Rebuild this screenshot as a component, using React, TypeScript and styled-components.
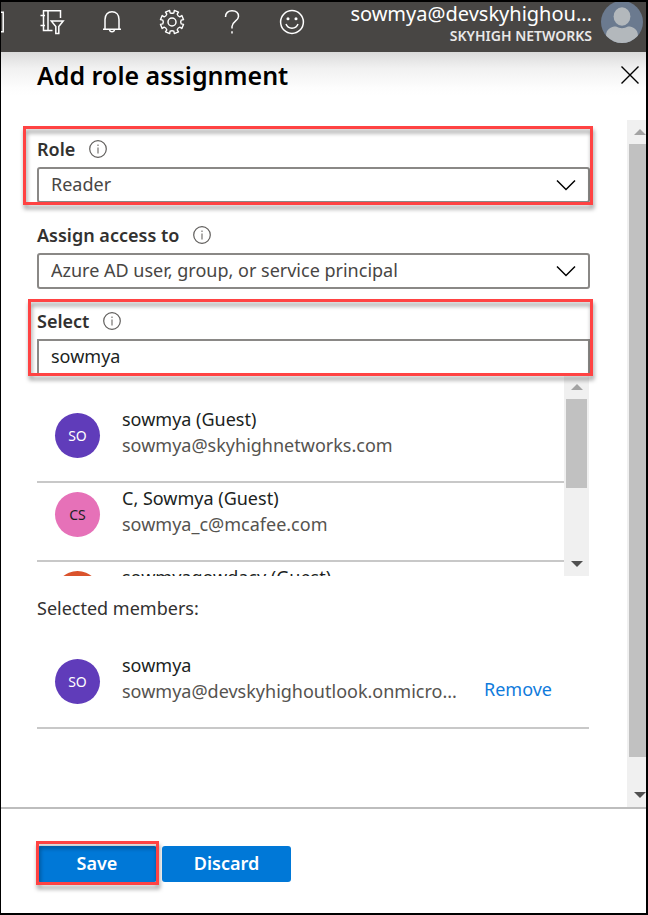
import React, { useState } from "react";
import styled, { createGlobalStyle, css } from "styled-components";

const GlobalStyle = createGlobalStyle`
  *, *::before, *::after { box-sizing: border-box; }
  body { margin: 0; background: #fff; }
  body, button, input, select { font-family: "Segoe UI", "Noto Sans", "Open Sans", sans-serif; }
`;

const callout = css`
  position: absolute;
  content: "";
  border: 3px solid #ff4343;
  filter: drop-shadow(1px 4px 2px rgba(0, 0, 0, 0.4));
  pointer-events: none;
`;

const Page = styled.div`
  display: flex;
  flex-direction: column;
  min-height: 100vh;
  border: solid #000;
  border-width: 2px 2px 2px 1px;
  background: #fff;
  color: #323130;
`;

const TopBar = styled.header`
  display: flex;
  height: 50px;
  flex: none;
  justify-content: space-between;
  background: #484644;
`;

const Tools = styled.nav`
  display: flex;
  align-items: flex-start;
  padding-top: 5px;
  gap: 30px;
`;

const ToolButton = styled.button<{ $clipped?: boolean }>`
  display: flex;
  justify-content: ${(p) => (p.$clipped ? "flex-end" : "center")};
  width: ${(p) => (p.$clipped ? 6 : 30)}px;
  height: 30px;
  align-items: center;
  border: 0;
  padding: 0;
  background: none;
  color: #fff;
  overflow: hidden;

  svg { flex: none; }
`;

const Account = styled.button`
  display: flex;
  gap: 9px;
  align-items: flex-start;
  border: 0;
  padding: 0 3px 0 0;
  background: none;
  color: #fff;
  text-align: right;
`;

const AccountText = styled.span`
  display: flex;
  flex-direction: column;
`;

const AccountName = styled.span`
  font-size: 20px;
  line-height: 24px;
`;

const Tenant = styled.span`
  font-size: 14px;
  font-weight: 600;
  line-height: 20px;
  color: #e8e8e8;
`;

const TitleBar = styled.div`
  display: flex;
  flex: none;
  height: 68px;
  justify-content: space-between;
  align-items: flex-start;
  padding: 5px 7px 0 36px;
  background: linear-gradient(#dadada, #f1f1f1 16px, #fdfdfd 36px, #fff 44px);
`;

const Title = styled.h1`
  margin: 0;
  font-size: 25px;
  font-weight: 600;
  line-height: 36px;
  color: #000;
`;

const CloseButton = styled.button`
  display: flex;
  margin-top: 9px;
  border: 0;
  padding: 0;
  background: none;
`;

const Body = styled.main`
  display: flex;
  flex: 1;
  min-height: 0;
`;

const Content = styled.form`
  flex: 1;
  min-width: 0;
  padding: 17px 37px 0 36px;
`;

const Fields = styled.div`
  display: flex;
  flex-direction: column;
  gap: 20px;
`;

const Field = styled.div<{ $mark?: "role" | "select" }>`
  position: relative;
  display: flex;
  flex-direction: column;
  gap: 6px;

  ${(p) =>
    p.$mark &&
    css`
      &::after {
        ${callout}
        inset: ${p.$mark === "role" ? "-11px -3px -2px -14px" : "-10px -3px -1px -9px"};
      }
    `}
`;

const LabelRow = styled.div`
  display: flex;
  align-items: center;
  gap: 14px;
  height: 24px;
`;

const Label = styled.label`
  font-size: 18px;
  font-weight: 600;
  line-height: 24px;
`;

const InfoButton = styled.button`
  display: flex;
  border: 0;
  padding: 0;
  background: none;
`;

const SelectWrap = styled.div`
  display: grid;
  align-items: center;

  > * { grid-area: 1 / 1; }
  svg { justify-self: end; margin-right: 14px; pointer-events: none; }
`;

const control = css`
  width: 100%;
  height: 36px;
  border: 2px solid #8a8886;
  padding: 0 12px 2px;
  background: #fff;
  font-size: 18px;
  line-height: 24px;
`;

const Select = styled.select`
  ${control}
  appearance: none;
  border-radius: 3px;
  color: #484644;
`;

const TextInput = styled.input`
  ${control}
  color: #201f1e;
  outline: 0;
`;

const ListFrame = styled.div`
  display: flex;
  height: 201px;
  padding-right: 1px;
  overflow: hidden;
`;

const People = styled.ul<{ $inset?: boolean }>`
  flex: 1;
  min-width: 0;
  margin: 0;
  padding: ${(p) => (p.$inset ? 29 : 0)}px 0 0;
  list-style: none;
`;

const Person = styled.li`
  display: flex;
  height: 79px;
  align-items: flex-start;
  border-bottom: 2px solid #c8c8c8;
  padding: 2px 0 0 18px;
`;

const Avatar = styled.span<{ $bg: string; $fg: string }>`
  display: flex;
  flex: none;
  width: 45px;
  height: 45px;
  align-items: center;
  justify-content: center;
  margin: 7px 22px 0 0;
  border-radius: 50%;
  background: ${(p) => p.$bg};
  color: ${(p) => p.$fg};
  font-size: 14px;
`;

const PersonText = styled.span`
  display: flex;
  flex-direction: column;
  min-width: 342px;
  font-size: 18px;
  line-height: 26px;
  white-space: nowrap;
`;

const Name = styled.span`
  color: #201f1e;
`;

const Email = styled.span`
  color: #55534f;
`;

const RemoveButton = styled.button`
  margin: 24px 0 0 20px;
  border: 0;
  padding: 0;
  background: none;
  color: #0f7bdc;
  font-size: 18px;
  line-height: 26px;
`;

const SelectedHeading = styled.h2`
  margin: 19px 0 29px;
  font-size: 18px;
  font-weight: 400;
  line-height: 26px;
`;

const Selected = styled.section`
  padding-right: 1px;
`;

const Track = styled.div<{ $width: number }>`
  display: flex;
  flex: none;
  flex-direction: column;
  width: ${(p) => p.$width}px;
  background: #f0f0f0;
  overflow: hidden;
`;

const Arrow = styled.span`
  display: flex;
  flex: none;
  width: 25px;
  height: 24px;
  align-items: center;
  justify-content: center;
`;

const Travel = styled.div`
  flex: 1;
  min-height: 0;
  padding: 0 2px;
  width: 25px;
`;

const Thumb = styled.div<{ $share: number }>`
  height: ${(p) => p.$share}%;
  background: #c1c1c1;
`;

const Footer = styled.footer`
  display: flex;
  flex: none;
  gap: 5px;
  height: 106px;
  border-top: 2px solid #bdbdbd;
  padding: 37px 36px 0;
`;

const ActionButton = styled.button<{ $wide?: boolean; $marked?: boolean }>`
  position: relative;
  width: ${(p) => (p.$wide ? 129 : 120)}px;
  height: 36px;
  border: 0;
  border-radius: 3px;
  padding: 0 0 2px;
  background: #0078d7;
  color: #fff;
  font-size: 18px;
  font-weight: 600;
  line-height: 24px;

  ${(p) =>
    p.$marked &&
    css`
      &::after {
        ${callout}
        inset: -5px -2px -3px -1px;
      }
    `}
`;

const Line = ({ size = 26, children }: { size?: number; children: React.ReactNode }) => (
  <svg width={size} height={size} viewBox={`0 0 ${size} ${size}`} fill="none" stroke="currentColor" strokeWidth="1.5" aria-hidden="true">
    {children}
  </svg>
);

const DirectoryFilterIcon = () => (
  <Line>
    <path d="M4.5 1.5V21.5H13.5M9 1.5V21.5M1.5 6.5H6M1.5 16.5H6M3.8 1.7H21.5V9" />
    <path d="M12.3 12H24.2L19.8 17.5V24.5H16.8V17.5Z" strokeWidth="1.5" />
  </Line>
);

const BellIcon = () => (
  <Line>
    <path d="M4 20.2H22M6 20V10.5C6 5.5 9 2.8 13 2.8S20 5.5 20 10.5V20M10.5 20.5C10.8 23.5 15.2 23.5 15.5 20.5" />
  </Line>
);

const gearPath = Array.from({ length: 8 }, (_, i) => {
  const point = (deg: number, r: number) => {
    const a = ((i * 45 + deg + 22.5) * Math.PI) / 180;
    return `${(13 + r * Math.cos(a)).toFixed(2)} ${(13 + r * Math.sin(a)).toFixed(2)}`;
  };
  return `${i ? "L" : "M"}${point(-11, 9.4)}L${point(-11, 11.8)}L${point(11, 11.8)}L${point(11, 9.4)}Q${point(22.5, 8.2)} ${point(34, 9.4)}`;
}).join("");

const GearIcon = () => (
  <Line>
    <path d={`${gearPath}Z`} strokeLinejoin="round" strokeWidth="1.4" />
    <circle cx="13" cy="13" r="4" />
  </Line>
);

const HelpIcon = () => (
  <Line>
    <path d="M6.5 8C6.5 4 9 1.8 13 1.8S19.5 4 19.5 7.6C19.5 12 13 12.5 13 17.5V19.5M13 22.2V24.6" />
  </Line>
);

const SmileIcon = () => (
  <Line>
    <circle cx="13" cy="13" r="11.4" />
    <path d="M7 15C9 20.5 17 20.5 19 15" />
    <circle cx="9" cy="9.8" r="0.8" fill="currentColor" />
    <circle cx="17" cy="9.8" r="0.8" fill="currentColor" />
  </Line>
);

const UserPicture = () => (
  <svg width="42" height="42" viewBox="0 0 42 42" aria-hidden="true">
    <defs>
      <clipPath id="user-disc">
        <circle cx="21" cy="20" r="21" />
      </clipPath>
    </defs>
    <g clipPath="url(#user-disc)">
      <rect width="42" height="42" fill="#6b7a8f" />
      <path d="M5 42V34C5 27 10 24.5 15 24.5Q21 28 27 24.5C32 24.5 37 27 37 34V42Z" fill="#b3b8bc" />
      <ellipse cx="21" cy="14.5" rx="8.4" ry="9.2" fill="#b3b8bc" />
    </g>
  </svg>
);

const InfoIcon = () => (
  <svg width="18" height="18" viewBox="0 0 18 18" fill="none" stroke="#605e5c" aria-hidden="true">
    <circle cx="9" cy="9" r="8.3" strokeWidth="1.2" />
    <path d="M9 7.5V13.5M9 4.5V6" strokeWidth="1.4" stroke="#8a8886" />
  </svg>
);

const Chevron = () => (
  <svg width="20" height="12" viewBox="0 0 20 12" fill="none" stroke="#000" strokeWidth="1.5" aria-hidden="true">
    <path d="M1 1.5L10 10.5L19 1.5" />
  </svg>
);

const Scrollbar = ({ width, share }: { width: number; share: number }) => (
  <Track $width={width} aria-hidden="true">
    <Arrow>
      <svg width="12" height="6" viewBox="0 0 12 6"><path d="M0 6L6 0L12 6Z" fill="#a3a3a3" /></svg>
    </Arrow>
    <Travel>
      <Thumb $share={share} />
    </Travel>
    <Arrow>
      <svg width="12" height="6" viewBox="0 0 12 6"><path d="M0 0L6 6L12 0Z" fill="#505050" /></svg>
    </Arrow>
  </Track>
);

type PersonData = { initials: string; name: string; email: string; bg: string; fg: string };

const results: PersonData[] = [
  { initials: "SO", name: "sowmya (Guest)", email: "sowmya@skyhighnetworks.com", bg: "#603cba", fg: "#fff" },
  { initials: "CS", name: "C, Sowmya (Guest)", email: "sowmya_c@mcafee.com", bg: "#e671b8", fg: "#201f1e" },
  { initials: "", name: "sowmyagowdacy (Guest)", email: "", bg: "#da532c", fg: "#fff" },
];

const selected: PersonData = {
  initials: "SO",
  name: "sowmya",
  email: "sowmya@devskyhighoutlook.onmicro...",
  bg: "#603cba",
  fg: "#fff",
};

const PersonRow = ({ person, children }: { person: PersonData; children?: React.ReactNode }) => (
  <Person>
    <Avatar $bg={person.bg} $fg={person.fg}>{person.initials}</Avatar>
    <PersonText>
      <Name>{person.name}</Name>
      <Email>{person.email}</Email>
    </PersonText>
    {children}
  </Person>
);

const FieldLabel = ({ id, text }: { id: string; text: string }) => (
  <LabelRow>
    <Label htmlFor={id}>{text}</Label>
    <InfoButton type="button" aria-label={`About ${text}`}><InfoIcon /></InfoButton>
  </LabelRow>
);

export default function App() {
  const [query, setQuery] = useState("sowmya");

  return (
    <>
      <GlobalStyle />
      <Page>
        <TopBar>
          <Tools aria-label="Portal tools">
            <ToolButton $clipped aria-label="Cloud Shell"><Line><path d="M2 3.2H22.2V22.8H2" /></Line></ToolButton>
            <ToolButton aria-label="Directory and subscription"><DirectoryFilterIcon /></ToolButton>
            <ToolButton aria-label="Notifications"><BellIcon /></ToolButton>
            <ToolButton aria-label="Settings"><GearIcon /></ToolButton>
            <ToolButton aria-label="Help"><HelpIcon /></ToolButton>
            <ToolButton aria-label="Feedback"><SmileIcon /></ToolButton>
          </Tools>
          <Account>
            <AccountText>
              <AccountName>sowmya@devskyhighou...</AccountName>
              <Tenant>SKYHIGH NETWORKS</Tenant>
            </AccountText>
            <UserPicture />
          </Account>
        </TopBar>

        <TitleBar>
          <Title>Add role assignment</Title>
          <CloseButton aria-label="Close">
            <svg width="18" height="18" viewBox="0 0 18 18" stroke="#000" strokeWidth="1.4" aria-hidden="true">
              <path d="M0.5 0.5L17.5 17.5M17.5 0.5L0.5 17.5" />
            </svg>
          </CloseButton>
        </TitleBar>

        <Body>
          <Content id="assignment" onSubmit={(e) => e.preventDefault()}>
            <Fields>
              <Field $mark="role">
                <FieldLabel id="role" text="Role" />
                <SelectWrap>
                  <Select id="role"><option>Reader</option></Select>
                  <Chevron />
                </SelectWrap>
              </Field>
              <Field>
                <FieldLabel id="access" text="Assign access to" />
                <SelectWrap>
                  <Select id="access"><option>Azure AD user, group, or service principal</option></Select>
                  <Chevron />
                </SelectWrap>
              </Field>
              <Field $mark="select">
                <FieldLabel id="member" text="Select" />
                <TextInput id="member" value={query} onChange={(e) => setQuery(e.target.value)} />
              </Field>
            </Fields>
            <ListFrame>
              <People $inset>
                {results.map((person) => <PersonRow key={person.name} person={person} />)}
              </People>
              <Scrollbar width={25} share={58} />
            </ListFrame>
            <Selected>
              <SelectedHeading>Selected members:</SelectedHeading>
              <People>
                <PersonRow person={selected}>
                  <RemoveButton type="button">Remove</RemoveButton>
                </PersonRow>
              </People>
            </Selected>
          </Content>
          <Scrollbar width={19} share={96} />
        </Body>

        <Footer>
          <ActionButton $marked type="submit" form="assignment">Save</ActionButton>
          <ActionButton $wide type="button">Discard</ActionButton>
        </Footer>
      </Page>
    </>
  );
}
